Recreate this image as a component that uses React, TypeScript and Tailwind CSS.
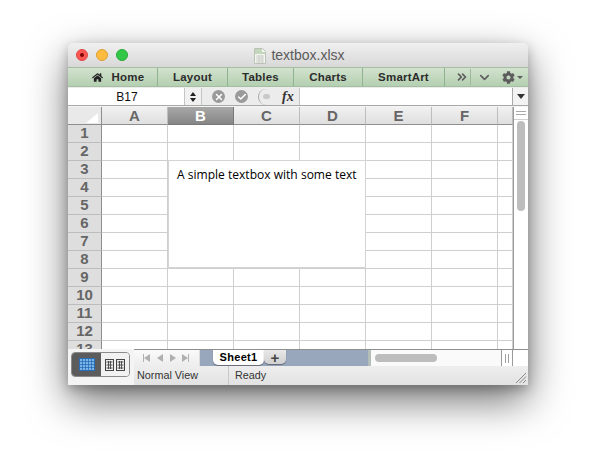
import React from 'react'
import { FaHome, FaCog } from 'react-icons/fa'
import { ChevronDown, ChevronsRight, X, Check } from 'lucide-react'

const sans = 'font-["Liberation_Sans",Arial,sans-serif]'
const tabs = [
  { label: 'Home', w: 'w-[90px]' },
  { label: 'Layout', w: 'w-[70px]' },
  { label: 'Tables', w: 'w-[66px]' },
  { label: 'Charts', w: 'w-[69px]' },
  { label: 'SmartArt', w: 'w-[82px]' },
]
const columns = ['A', 'B', 'C', 'D', 'E', 'F', '']
const rows = [1, 2, 3, 4, 5, 6, 7, 8, 9, 10, 11, 12, 13]

function TitleBar() {
  return (
    <div className="relative h-[24px] flex items-center rounded-t-[5px] bg-gradient-to-b from-[#f0f0f0] to-[#d8d8d8]">
      <div className="flex gap-[8px] pl-[8px]">
        <span className="w-[12px] h-[12px] rounded-full bg-[#fc5753] border border-[#df4744] flex items-center justify-center">
          <span className="w-[4px] h-[4px] rounded-full bg-[#7e0508]" />
        </span>
        <span className="w-[12px] h-[12px] rounded-full bg-[#fdbc40] border border-[#de9f34]" />
        <span className="w-[12px] h-[12px] rounded-full bg-[#33c748] border border-[#27aa35]" />
      </div>
      <div className="flex-1 flex items-center justify-center gap-[5px] pr-[57px] pt-[1px]">
        <svg width="12" height="16" viewBox="0 0 12 16">
          <path d="M.5.5h8l3 3v12H.5z" fill="#f4f6f2" stroke="#b9c2b5" />
          <path d="M1 1h7v3h3v2H1z" fill="#c4d6bc" />
          <path d="M2 8h8M2 10h8M2 12h8M2 14h8M5 7v8M8 7v8" stroke="#c3c8c0" strokeWidth="0.8" />
        </svg>
        <span className={`${sans} text-[14px] text-[#5a5a5a]`}>textbox.xlsx</span>
      </div>
    </div>
  )
}

function Ribbon() {
  return (
    <div className="h-[20px] flex bg-gradient-to-b from-[#d2e2ce] to-[#b4cfb1] border-y border-[#a3bfa0]">
      {tabs.map((t) => (
        <div
          key={t.label}
          className={`${t.w} flex items-center justify-center gap-[9px] border-r border-[#8fb38d] pt-[1px] ${sans} text-[11.5px] tracking-[0.2px] font-bold text-[#2c2c2c]`}
        >
          {t.label === 'Home' && <FaHome size={11} className="text-[#222] ml-[11px]" />}
          <span>{t.label}</span>
        </div>
      ))}
      <div className="flex-1 flex items-center text-[#5c5c5c] pl-[10px]">
        <ChevronsRight size={14} strokeWidth={2.8} />
        <span className="w-px h-[16px] bg-[#9dbb9a] ml-[1px]" />
        <ChevronDown size={15} strokeWidth={2.5} className="ml-[6px]" />
        <FaCog size={13} className="ml-[10px]" />
        <span className="w-0 h-0 ml-[2px] border-x-[3px] border-x-transparent border-t-[3px] border-t-[#5c5c5c]" />
      </div>
    </div>
  )
}

function FormulaBar() {
  return (
    <div className="h-[19px] flex items-stretch bg-[#ececec] border-b border-[#a8a8a8] pt-[1px]">
      <div className={`w-[116px] bg-white flex items-center justify-center pl-[2px] ${sans} text-[12px] text-[#111]`}>B17</div>
      <div className="w-[18px] flex flex-col items-center justify-center gap-[2px] border-x border-[#c4c4c4] bg-[#f1f1f1]">
        <span className="w-0 h-0 border-x-[3px] border-x-transparent border-b-[4px] border-b-[#222]" />
        <span className="w-0 h-0 border-x-[3px] border-x-transparent border-t-[4px] border-t-[#222]" />
      </div>
      <div className="w-[98px] flex items-center bg-[#ececec] pl-[10px] border-r border-[#c4c4c4]">
        <span className="w-[13px] h-[13px] rounded-full bg-[#9a9a9a] flex items-center justify-center">
          <X size={10} strokeWidth={3.5} className="text-white" />
        </span>
        <span className="w-[13px] h-[13px] rounded-full bg-[#9a9a9a] flex items-center justify-center ml-[10px]">
          <Check size={10} strokeWidth={3.5} className="text-white" />
        </span>
        <span className="w-[15px] h-[16px] rounded-l-full border-l border-[#aaa] flex items-center justify-center ml-[10px]">
          <span className="w-[7px] h-[5px] rounded-full bg-[#c9c9c9]" />
        </span>
        <span className="font-['Liberation_Serif',serif] italic font-bold text-[14px] text-[#333] ml-[9px]">fx</span>
      </div>
      <div className="flex-1 bg-white" />
      <div className="w-[16px] bg-[#f3f3f3] border-l border-[#a8a8a8] flex items-center justify-center">
        <span className="w-0 h-0 border-x-[4px] border-x-transparent border-t-[5px] border-t-[#333]" />
      </div>
    </div>
  )
}

function Sheet() {
  return (
    <div className="relative flex-1 overflow-hidden bg-white">
      <div className="grid grid-cols-[34px_repeat(6,66px)_15px] grid-rows-[18px] auto-rows-[18px]">
        <div className="border-r border-b border-[#8e8e8e] bg-[#e9e9e9] flex items-end justify-end p-[1px] pr-[3px]">
          <span className="w-0 h-0 border-l-[12px] border-l-transparent border-b-[10px] border-b-white" />
        </div>
        {columns.map((c) => (
          <div
            key={c}
            className={`flex items-center justify-center border-b border-r pt-[1px] ${sans} text-[15px] font-bold ${
              c === 'B'
                ? 'bg-gradient-to-b from-[#a8a8a8] to-[#868686] text-white border-[#777]'
                : 'bg-gradient-to-b from-[#f1f1f1] to-[#dfdfdf] text-[#666] border-b-[#8e8e8e] border-r-[#bdbdbd]'
            }`}
          >
            {c}
          </div>
        ))}
        {rows.map((r) => (
          <React.Fragment key={r}>
            <div className={`flex items-center justify-center bg-[#dedede] border-r border-b border-r-[#8e8e8e] border-b-[#bdbdbd] ${sans} text-[15px] font-bold text-[#666]`}>
              {r}
            </div>
            {columns.map((c) => (
              <div key={c} className="border-r border-b border-[#cfcfcf]" />
            ))}
          </React.Fragment>
        ))}
      </div>
      {/* floating textbox */}
      <div className='absolute left-[100px] top-[53px] w-[198px] h-[108px] bg-white border border-[#d4d4d4] px-[8px] py-[5px] font-["Open_Sans",sans-serif] text-[12.05px] leading-[17px] text-black'>
        A simple textbox with some text
      </div>
    </div>
  )
}

function Scrollbar() {
  return (
    <div className="w-[15px] bg-white border-l border-[#9a9a9a] flex flex-col items-center">
      <div className="h-[13px] w-full flex flex-col justify-center items-center gap-[2px] border-b border-[#cfcfcf]">
        <span className="w-[10px] h-px bg-[#a8a8a8]" />
        <span className="w-[10px] h-px bg-[#a8a8a8]" />
      </div>
      <div className="mt-[1px] w-[8px] h-[90px] rounded-full bg-[#bdbdbd]" />
    </div>
  )
}

function SheetTabs() {
  return (
    <div className="h-[17px] flex border-t border-[#8e8e8e] bg-white">
      <div className="w-[66px] border-r border-[#dcdcdc] bg-gradient-to-b from-[#fafafa] to-[#ededed] flex items-center justify-around px-[6px]">
        <span className="w-[8px] h-[8px] flex items-center">
          <span className="w-px h-[8px] bg-[#b0b0b0]" />
          <span className="w-0 h-0 border-y-[4px] border-y-transparent border-r-[6px] border-r-[#b0b0b0]" />
        </span>
        <span className="w-0 h-0 border-y-[4px] border-y-transparent border-r-[6px] border-r-[#b0b0b0]" />
        <span className="w-0 h-0 border-y-[4px] border-y-transparent border-l-[6px] border-l-[#b0b0b0]" />
        <span className="w-[8px] h-[8px] flex items-center">
          <span className="w-0 h-0 border-y-[4px] border-y-transparent border-l-[6px] border-l-[#b0b0b0]" />
          <span className="w-px h-[8px] bg-[#b0b0b0]" />
        </span>
      </div>
      <div className="w-[171px] bg-[#98a7bc] flex items-start pl-[13px] border-r-[3px] border-[#b4bdb8]">
        <div className={`w-[51px] h-[15px] bg-white rounded-b-[5px] flex items-center justify-center ${sans} text-[11px] tracking-[0.3px] font-bold text-black shadow-[0_1px_1px_#667]`}>
          Sheet1
        </div>
        <div className={`w-[22px] h-[14px] bg-gradient-to-b from-[#e8e8e8] to-[#d0d0d0] rounded-b-[5px] flex items-center justify-center ${sans} text-[#444] text-[15px] font-bold leading-none shadow-[0_1px_1px_#667]`}>
          +
        </div>
      </div>
      <div className="flex-1 flex items-center pl-[4px] bg-[#fafafa]">
        <div className="w-[62px] h-[8px] rounded-full bg-[#bdbdbd]" />
      </div>
      <div className="w-[12px] border-x border-[#9a9a9a] flex items-center justify-center gap-[2px] bg-white">
        <span className="w-px h-[9px] bg-[#a0a0a0]" />
        <span className="w-px h-[9px] bg-[#a0a0a0]" />
      </div>
      <div className="w-[15px] bg-white" />
    </div>
  )
}

function ViewSwitch() {
  return (
    <div className="w-[66px] h-[36px] bg-[#f4f4f4] pt-[3px] pl-[3px]">
      <div className="flex w-[59px] h-[25px] rounded-[4px] border border-[#8a8a8a] overflow-hidden">
        <div className="w-[29px] bg-[#5c5c5c] flex items-center justify-center">
          <svg width="16" height="13" viewBox="0 0 16 13">
            <rect x="0.5" y="0.5" width="15" height="12" fill="#7db5ea" stroke="#2a6db5" />
            <path d="M0 3.5h16M0 6.5h16M0 9.5h16M3.5 0v13M6.5 0v13M9.5 0v13M12.5 0v13" stroke="#2a6db5" strokeWidth="0.8" />
          </svg>
        </div>
        <div className="flex-1 bg-[#f1f1f1] flex items-center justify-center gap-[2px]">
          {[0, 1].map((i) => (
            <svg key={i} width="9" height="12" viewBox="0 0 9 12">
              <rect x="0.5" y="0.5" width="8" height="11" fill="#eee" stroke="#444" />
              <path d="M1.5 3h6M1.5 6h6M1.5 9h6M3.5 2v8M5.5 2v8" stroke="#444" strokeWidth="0.9" />
            </svg>
          ))}
        </div>
      </div>
    </div>
  )
}

function StatusBar() {
  return (
    <div className={`h-[19px] flex bg-gradient-to-b from-[#eeeeee] to-[#e2e2e2] ${sans} text-[10.8px] text-[#333]`}>
      <div className="w-[95px] flex items-center pl-[3px] border-r border-[#c8c8c8]">Normal View</div>
      <div className="flex-1 flex items-center pl-[6px]">Ready</div>
      <svg width="14" height="14" viewBox="0 0 14 14" className="self-end mb-[1px] mr-[1px]">
        <path d="M13 3L3 13M13 6.5L6.5 13M13 10L10 13" stroke="#8a8a8a" strokeWidth="1" />
      </svg>
    </div>
  )
}

export default function App() {
  return (
    <div className="w-[596px] h-[476px] overflow-hidden bg-white pt-[43px] pl-[68px]">
      <div className="w-[460px] h-[342px] flex flex-col rounded-t-[5px] bg-[#ececec] shadow-[0_16px_40px_rgba(0,0,0,0.55),0_4px_12px_rgba(0,0,0,0.25)]">
        <TitleBar />
        <Ribbon />
        <FormulaBar />
        <div className="h-[1px] bg-[#f4f4f4]" />
        <div className="flex h-[242px]">
          <Sheet />
          <Scrollbar />
        </div>
        <div className="flex flex-1">
          <ViewSwitch />
          <div className="flex-1 flex flex-col">
            <SheetTabs />
            <StatusBar />
          </div>
        </div>
      </div>
    </div>
  )
}
